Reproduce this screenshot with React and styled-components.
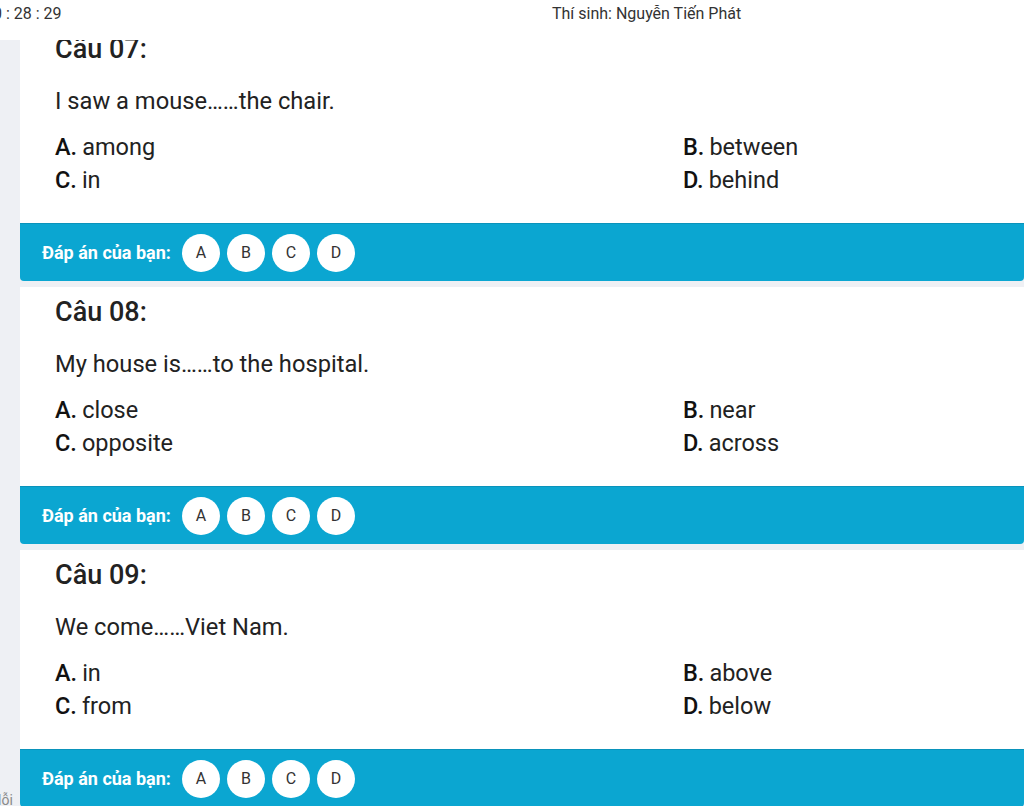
import React from "react";
import styled, { createGlobalStyle } from "styled-components";

const Global = createGlobalStyle`
  html, body { margin: 0; padding: 0; }
  body {
    background: #eef0f4;
    font-family: Roboto, "Noto Sans", "Liberation Sans", sans-serif;
    color: #212529;
    overflow: hidden;
  }
`;

const Page = styled.div`
  width: 1024px;
  height: 806px;
  display: flex;
  flex-direction: column;
  overflow: hidden;
`;

const Header = styled.header`
  height: 40px;
  flex: none;
  background: #fff;
  display: flex;
  align-items: flex-start;
  padding-top: 4px;
  box-sizing: border-box;
  font-size: 16px;
  color: #333;
`;

const Timer = styled.div`
  margin-left: -7px;
  width: 559px;
`;

const Candidate = styled.div``;

const Body = styled.div`
  flex: 1;
  display: flex;
  min-height: 0;
  overflow: hidden;
`;

const Side = styled.aside`
  width: 20px;
  flex: none;
  display: flex;
  flex-direction: column;
  justify-content: flex-end;
  overflow: hidden;
`;

const SideText = styled.span`
  font-size: 14px;
  line-height: 16px;
  color: #8a8a8a;
  margin-left: -2px;
  margin-bottom: -2px;
  white-space: nowrap;
`;

const Scroll = styled.div`
  flex: 1;
  overflow: hidden;
`;

const List = styled.div`
  margin-top: -16px;
  display: flex;
  flex-direction: column;
  gap: 6px;
`;

const Question = styled.section`
  display: flex;
  flex-direction: column;
`;

const Card = styled.div`
  background: #fff;
  height: 199px;
  box-sizing: border-box;
  padding: 10px 0 0 35px;
`;

const Title = styled.h3`
  margin: 0;
  font-size: 27px;
  font-weight: 500;
  line-height: 30px;
  color: #222;
`;

const Prompt = styled.p`
  margin: 23px 0 0;
  font-size: 23.7px;
  line-height: 28px;
  color: #222;
`;

const Options = styled.div`
  margin-top: 18px;
  display: grid;
  grid-template-columns: 628px 1fr;
  row-gap: 5px;
`;

const Option = styled.div`
  font-size: 23.5px;
  line-height: 28px;
  color: #222;
`;

const Letter = styled.span`
  font-weight: 500;
  color: #111;
  margin-right: 5px;
`;

const AnswerBar = styled.div`
  height: 58px;
  background: #0ba6d1;
  border-top: 1px solid #0a93bb;
  border-radius: 0 0 4px 4px;
  box-sizing: border-box;
  display: flex;
  align-items: center;
  padding-left: 22px;
  gap: 7px;
`;

const BarLabel = styled.span`
  color: #fff;
  font-weight: 700;
  font-size: 18px;
  margin-right: 4px;
`;

const Choice = styled.button`
  width: 38px;
  height: 38px;
  border-radius: 50%;
  border: none;
  background: #fff;
  font-family: Roboto, "Noto Sans", sans-serif;
  font-size: 16px;
  color: #333;
  padding: 0;
  display: flex;
  align-items: center;
  justify-content: center;
`;

const questions = [
  {
    n: "07",
    text: "I saw a mouse……the chair.",
    opts: [["A", "among"], ["B", "between"], ["C", "in"], ["D", "behind"]],
  },
  {
    n: "08",
    text: "My house is……to the hospital.",
    opts: [["A", "close"], ["B", "near"], ["C", "opposite"], ["D", "across"]],
  },
  {
    n: "09",
    text: "We come……Viet Nam.",
    opts: [["A", "in"], ["B", "above"], ["C", "from"], ["D", "below"]],
  },
];

export default function App() {
  return (
    <Page>
      <Global />
      <Header>
        <Timer>0 : 28 : 29</Timer>
        <Candidate>Thí sinh: Nguyễn Tiến Phát</Candidate>
      </Header>
      <Body>
        <Side>
          <SideText>lỗi</SideText>
        </Side>
        <Scroll>
          <List>
            {questions.map((q) => (
              <Question key={q.n}>
                <Card>
                  <Title>Câu {q.n}:</Title>
                  <Prompt>{q.text}</Prompt>
                  <Options>
                    {q.opts.map(([l, t]) => (
                      <Option key={l}>
                        <Letter>{l}.</Letter>
                        {t}
                      </Option>
                    ))}
                  </Options>
                </Card>
                <AnswerBar>
                  <BarLabel>Đáp án của bạn:</BarLabel>
                  {["A", "B", "C", "D"].map((c) => (
                    <Choice key={c}>{c}</Choice>
                  ))}
                </AnswerBar>
              </Question>
            ))}
          </List>
        </Scroll>
      </Body>
    </Page>
  );
}
